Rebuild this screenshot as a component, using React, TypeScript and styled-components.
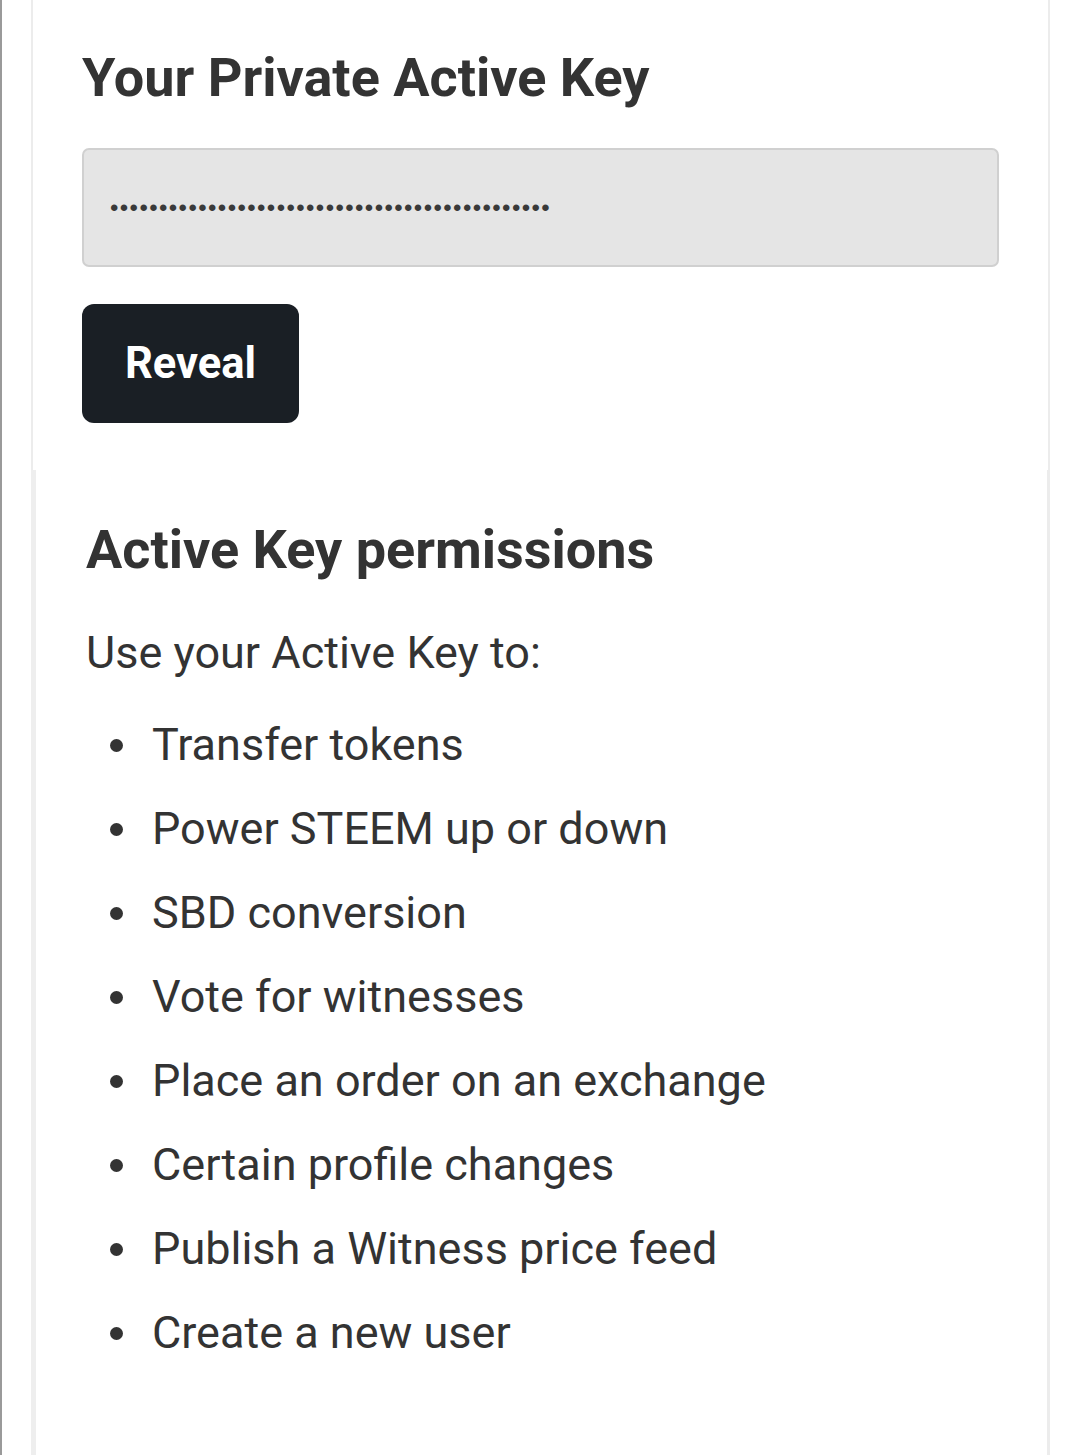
import React from "react";
import styled, { createGlobalStyle } from "styled-components";

const GlobalStyle = createGlobalStyle`
  html, body {
    margin: 0;
    padding: 0;
    background: #ffffff;
  }
  body {
    font-family: Roboto, "Liberation Sans", Arial, sans-serif;
    color: #333333;
  }
`;

const Page = styled.div`
  min-height: 1455px;
  box-sizing: border-box;
  border-left: 2px solid #9a9a9a;
  padding: 0 30px 0 29px;
  display: flex;
  flex-direction: column;
`;

const KeySection = styled.section`
  border-left: 2px solid #ececec;
  border-right: 2px solid #ececec;
  padding: 45px 49px 47px 49px;
  display: flex;
  flex-direction: column;
  align-items: flex-start;
`;

const PermSection = styled.section`
  flex: 1;
  border-left: 5px solid #eeeeee;
  border-right: 3px solid #ececec;
  padding: 47px 50px 60px 50px;
`;

const Heading = styled.h3`
  margin: 0;
  font-family: Roboto, "Liberation Sans", sans-serif;
  font-weight: 700;
  font-size: 54px;
  line-height: 66px;
  color: #333333;
`;

const KeyField = styled.div`
  box-sizing: border-box;
  align-self: stretch;
  margin-top: 37px;
  height: 119px;
  background: #e5e5e5;
  border: 2px solid #d0d0d0;
  border-radius: 7px;
  padding: 0 26px;
  display: flex;
  align-items: center;
  font-family: "Liberation Sans", Arial, sans-serif;
  font-size: 24px;
  letter-spacing: 1.4px;
  color: #3a3a3a;
  overflow: hidden;
  white-space: nowrap;
`;

const RevealButton = styled.button`
  margin-top: 37px;
  height: 119px;
  padding: 0 43px;
  border: none;
  border-radius: 12px;
  background: #1a1f25;
  color: #ffffff;
  font-family: Roboto, "Liberation Sans", sans-serif;
  font-weight: 700;
  font-size: 43.5px;
  cursor: pointer;
`;

const Intro = styled.p`
  margin: 37px 0 0 0;
  font-size: 45px;
  line-height: 66px;
  color: #333333;
`;

const List = styled.ul`
  list-style: none;
  margin: 26px 0 0 0;
  padding: 0 0 0 24px;
  display: flex;
  flex-direction: column;
  gap: 18px;
`;

const Item = styled.li`
  display: flex;
  align-items: center;
  gap: 29px;
  font-size: 45px;
  line-height: 66px;
  color: #333333;
`;

const Bullet = styled.span`
  flex: none;
  width: 13px;
  height: 13px;
  border-radius: 50%;
  background: #333333;
`;

const permissions = [
  "Transfer tokens",
  "Power STEEM up or down",
  "SBD conversion",
  "Vote for witnesses",
  "Place an order on an exchange",
  "Certain profile changes",
  "Publish a Witness price feed",
  "Create a new user",
];

export default function App() {
  return (
    <>
      <GlobalStyle />
      <Page>
        <KeySection>
          <Heading>Your Private Active Key</Heading>
          <KeyField>{"•".repeat(45)}</KeyField>
          <RevealButton type="button">Reveal</RevealButton>
        </KeySection>
        <PermSection>
          <Heading>Active Key permissions</Heading>
          <Intro>Use your Active Key to:</Intro>
          <List>
            {permissions.map((p) => (
              <Item key={p}>
                <Bullet />
                {p}
              </Item>
            ))}
          </List>
        </PermSection>
      </Page>
    </>
  );
}
